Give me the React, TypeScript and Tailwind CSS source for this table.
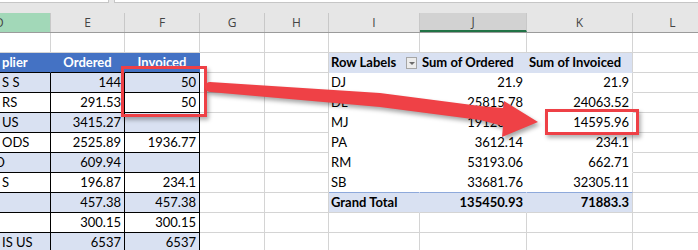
import React from 'react';

type Kind = 'g' | 'th' | 'tb' | 'tw' | 'ph' | 'pd' | 'ps' | 'pg';
type Cell = { t?: string; k?: Kind; a?: 'l' | 'r' | 'c'; cut?: string };

const widths = ['w-[51px]', 'w-[74px]', 'w-[75px]', 'w-[65px]', 'w-[64px]', 'w-[91px]', 'w-[107px]', 'w-[106px]', 'w-[80px]'];
const letters = ['D', 'E', 'F', 'G', 'H', 'I', 'J', 'K', 'L'];

// background / border colours per cell kind
const look: Record<Kind, { bg: string; r: string; b: string; txt?: string }> = {
  g: { bg: 'bg-white', r: 'border-r-[#d4d4d4]', b: 'border-b-[#d4d4d4]' },
  th: { bg: 'bg-[#4472c4]', r: 'border-r-[#4472c4]', b: 'border-b-black', txt: 'text-white font-bold' },
  tb: { bg: 'bg-[#d9e1f2]', r: 'border-r-black', b: 'border-b-black' },
  tw: { bg: 'bg-white', r: 'border-r-black', b: 'border-b-black' },
  ph: { bg: 'bg-[#d9e1f2]', r: 'border-r-[#d9e1f2]', b: 'border-b-[#d9e1f2]', txt: 'font-bold' },
  pd: { bg: 'bg-white', r: 'border-r-white', b: 'border-b-white' },
  ps: { bg: 'bg-white', r: 'border-r-white', b: 'border-b-[#8ea9db]' },
  pg: { bg: 'bg-[#d9e1f2]', r: 'border-r-[#d9e1f2]', b: 'border-b-[#d4d4d4]', txt: 'font-bold' },
};

const G: Cell = { k: 'g' };

function left(d: string, e: string, f: string, k: Kind, cut?: string): Cell[] {
  return [
    { t: d, k, a: 'l', cut },
    { t: e, k, a: 'r' },
    { t: f, k, a: 'r' },
  ];
}

function pivot(lbl: string, j: string, kk: string, k: Kind): Cell[] {
  return [
    { t: lbl, k, a: 'l' },
    { t: j, k, a: 'r' },
    { t: kk, k, a: 'r' },
  ];
}

const rows: Cell[][] = [
  [G, G, G, G, G, G, G, G, G],
  [
    { t: 'plier', k: 'th', a: 'l' },
    { t: 'Ordered', k: 'th', a: 'c' },
    { t: 'Invoiced', k: 'th', a: 'c' },
    G,
    G,
    { t: 'Row Labels', k: 'ph', a: 'l' },
    { t: 'Sum of Ordered', k: 'ph', a: 'l' },
    { t: 'Sum of Invoiced', k: 'ph', a: 'l' },
    G,
  ],
  [...left('S S', '144', '50', 'tb'), G, G, ...pivot('DJ', '21.9', '21.9', 'pd'), G],
  [...left('RS', '291.53', '50', 'tw'), G, G, ...pivot('DL', '25815.78', '24063.52', 'pd'), G],
  [...left('US', '3415.27', '', 'tb'), G, G, ...pivot('MJ', '19120.63', '14595.96', 'pd'), G],
  [...left('ODS', '2525.89', '1936.77', 'tw'), G, G, ...pivot('PA', '3612.14', '234.1', 'pd'), G],
  [...left('D', '609.94', '', 'tb', 'ml-[-7px]'), G, G, ...pivot('RM', '53193.06', '662.71', 'pd'), G],
  [...left('S', '196.87', '234.1', 'tw'), G, G, ...pivot('SB', '33681.76', '32305.11', 'ps'), G],
  [...left('', '457.38', '457.38', 'tb'), G, G, ...pivot('Grand Total', '135450.93', '71883.3', 'pg'), G],
  [...left('', '300.15', '300.15', 'tw'), G, G, G, G, G, G],
  [...left('IS US', '6537', '6537', 'tb'), G, G, G, G, G, G],
];

function SheetCell({ c, i }: { c: Cell; i: number }) {
  const k = c.k ?? 'g';
  const s = look[k];
  const pivotKind = k === 'ph' || k === 'pd' || k === 'ps' || k === 'pg';
  const r = pivotKind && i === 7 ? 'border-r-[#d4d4d4]' : s.r;
  const just = c.a === 'r' ? 'justify-end pr-[3px]' : c.a === 'c' ? 'justify-center' : 'justify-start pl-[2px]';
  return (
    <div className={`${widths[i]} h-[20px] shrink-0 flex items-center overflow-hidden whitespace-nowrap border-r border-b ${s.bg} ${r} ${s.b} ${s.txt ?? 'text-black'} ${just} pt-[1px]`}>
      {c.t ? <span className={c.cut ?? ''}>{c.t}</span> : null}
      {k === 'ph' && i === 5 && (
        <span className="ml-auto mr-[2px] w-[11px] h-[12px] border border-[#a6a6a6] bg-[#ececec] flex items-center justify-center">
          <span className="w-0 h-0 border-l-[3px] border-r-[3px] border-t-[3px] border-l-transparent border-r-transparent border-t-[#6b6b6b]" />
        </span>
      )}
    </div>
  );
}

export default function App() {
  return (
    <div className="relative w-[698px] h-[250px] overflow-hidden bg-white font-[Lato,sans-serif] text-[13px]">
      {/* formula bar strip */}
      <div className="h-[13px] bg-[#e6e6e6] flex items-start gap-[5px]">
        <div className="w-[109px] h-[3px] bg-white border-r border-b border-[#c6c6c6]" />
        <div className="flex-1 h-[3px] bg-white border-l border-b border-[#c6c6c6]" />
      </div>

      {/* column headers */}
      <div className="flex h-[20px] bg-[#e6e6e6] border-b border-[#9b9b9b] font-['Open_Sans',sans-serif] text-[12px] text-[#444]">
        {letters.map((l, i) => (
          <div
            key={l}
            className={`${widths[i]} shrink-0 flex items-center border-r border-r-[#c8c8c8] ${
              l === 'D' ? 'bg-[#a2d8b8] justify-start' : l === 'J' ? 'bg-[#d2d2d2] border-b-2 border-b-[#217346] justify-center' : 'justify-center'
            }`}
          >
            {l === 'D' ? <span className="ml-[-5px]">D</span> : l}
          </div>
        ))}
      </div>

      {/* cells */}
      <div className="flex flex-col">
        {rows.map((row, ri) => (
          <div key={ri} className="flex">
            {row.map((c, i) => (
              <SheetCell key={i} c={c} i={i} />
            ))}
          </div>
        ))}
      </div>

      {/* callout boxes */}
      <div className="absolute left-[121px] top-[66px] w-[86px] h-[51px] border-[3px] border-[#ee4046] shadow-[2px_3px_4px_rgba(0,0,0,0.3)]" />
      <div className="absolute left-[545px] top-[109px] w-[94px] h-[26px] border-[3px] border-[#ee4046] shadow-[2px_3px_4px_rgba(0,0,0,0.3)]" />

      {/* arrow */}
      <svg
        className="absolute left-0 top-0 pointer-events-none drop-shadow-[2px_3px_2px_rgba(0,0,0,0.35)]"
        width="698"
        height="250"
        viewBox="0 0 698 250"
      >
        <path
          d="M210,82 L380,93 L480,106 L503,108 L504,101 L538,122 L502,137 L503,126 L480,120 L380,107 L210,92 A5,5 0 0 1 210,82 Z"
          fill="#ef4146"
        />
      </svg>
    </div>
  );
}
